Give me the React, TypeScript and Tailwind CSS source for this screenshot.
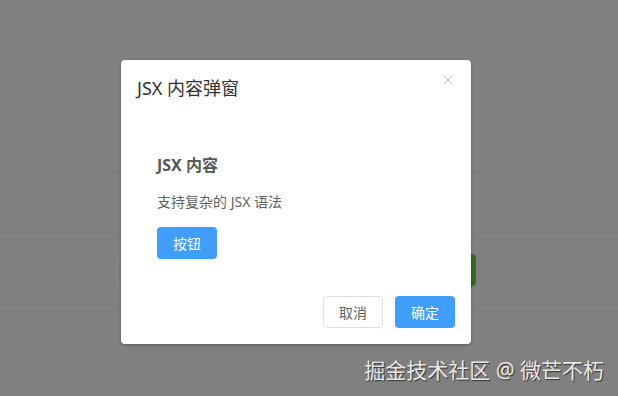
import { X } from "lucide-react";

const font = { fontFamily: '"Noto Sans", "Noto Sans CJK SC", sans-serif' };

export default function App() {
  return (
    <div className="relative h-[396px] w-[618px] overflow-hidden bg-[#808080]" style={font}>
      {/* page underneath the mask */}
      <div className="flex flex-col">
        <div className="h-[173px] border-b border-[#76787b]" />
        <div className="h-[61px] border-b border-[#76787b]" />
        <div className="flex h-[72px] items-center border-b border-[#76787b] pl-[116px] pr-[142px]">
          <div className="flex h-[28px] flex-1 rounded-l-[4px] border border-[#8a8a8a] border-r-0" />
          <div className="ml-2 h-[32px] w-[60px] rounded-[4px] bg-[#386a1f]" />
        </div>
      </div>

      {/* dialog */}
      <div className="absolute left-[121px] top-[60px] flex h-[284px] w-[350px] flex-col rounded-[4px] bg-white shadow-[0_1px_3px_rgba(0,0,0,0.3)]">
        <div className="flex items-start justify-between px-4 pt-4">
          <span className="text-[18px] leading-[24px] text-[#303133]">JSX 内容弹窗</span>
          <button type="button" className="mr-[-1px] mt-[-4px] text-[#a0a3a8]">
            <X className="h-[16px] w-[16px]" strokeWidth={1.1} />
          </button>
        </div>

        <div className="flex flex-1 flex-col px-9 pt-[53px]">
          <h3 className="text-[16px] font-bold leading-[24px] text-[#555759]">JSX 内容</h3>
          <p className="mt-[14px] text-[14px] leading-[22px] text-[#606266]">支持复杂的 JSX 语法</p>
          <div className="mt-[14px]">
            <button
              type="button"
              className="h-[32px] w-[60px] rounded-[4px] bg-[#409eff] text-[14px] text-white"
            >
              按钮
            </button>
          </div>
        </div>

        <div className="flex justify-end gap-3 px-4 pb-4">
          <button
            type="button"
            className="h-[32px] w-[60px] rounded-[4px] border border-[#dcdfe6] bg-white text-[14px] text-[#606266]"
          >
            取消
          </button>
          <button
            type="button"
            className="h-[32px] w-[60px] rounded-[4px] bg-[#409eff] text-[14px] text-white"
          >
            确定
          </button>
        </div>
      </div>

      {/* watermark */}
      <div className="absolute bottom-[12px] right-[14px] text-[21px] leading-[28px] text-[#e8e8e8] [text-shadow:1px_1px_1px_rgba(0,0,0,0.6)]">
        掘金技术社区 @ 微芒不朽
      </div>
    </div>
  );
}
